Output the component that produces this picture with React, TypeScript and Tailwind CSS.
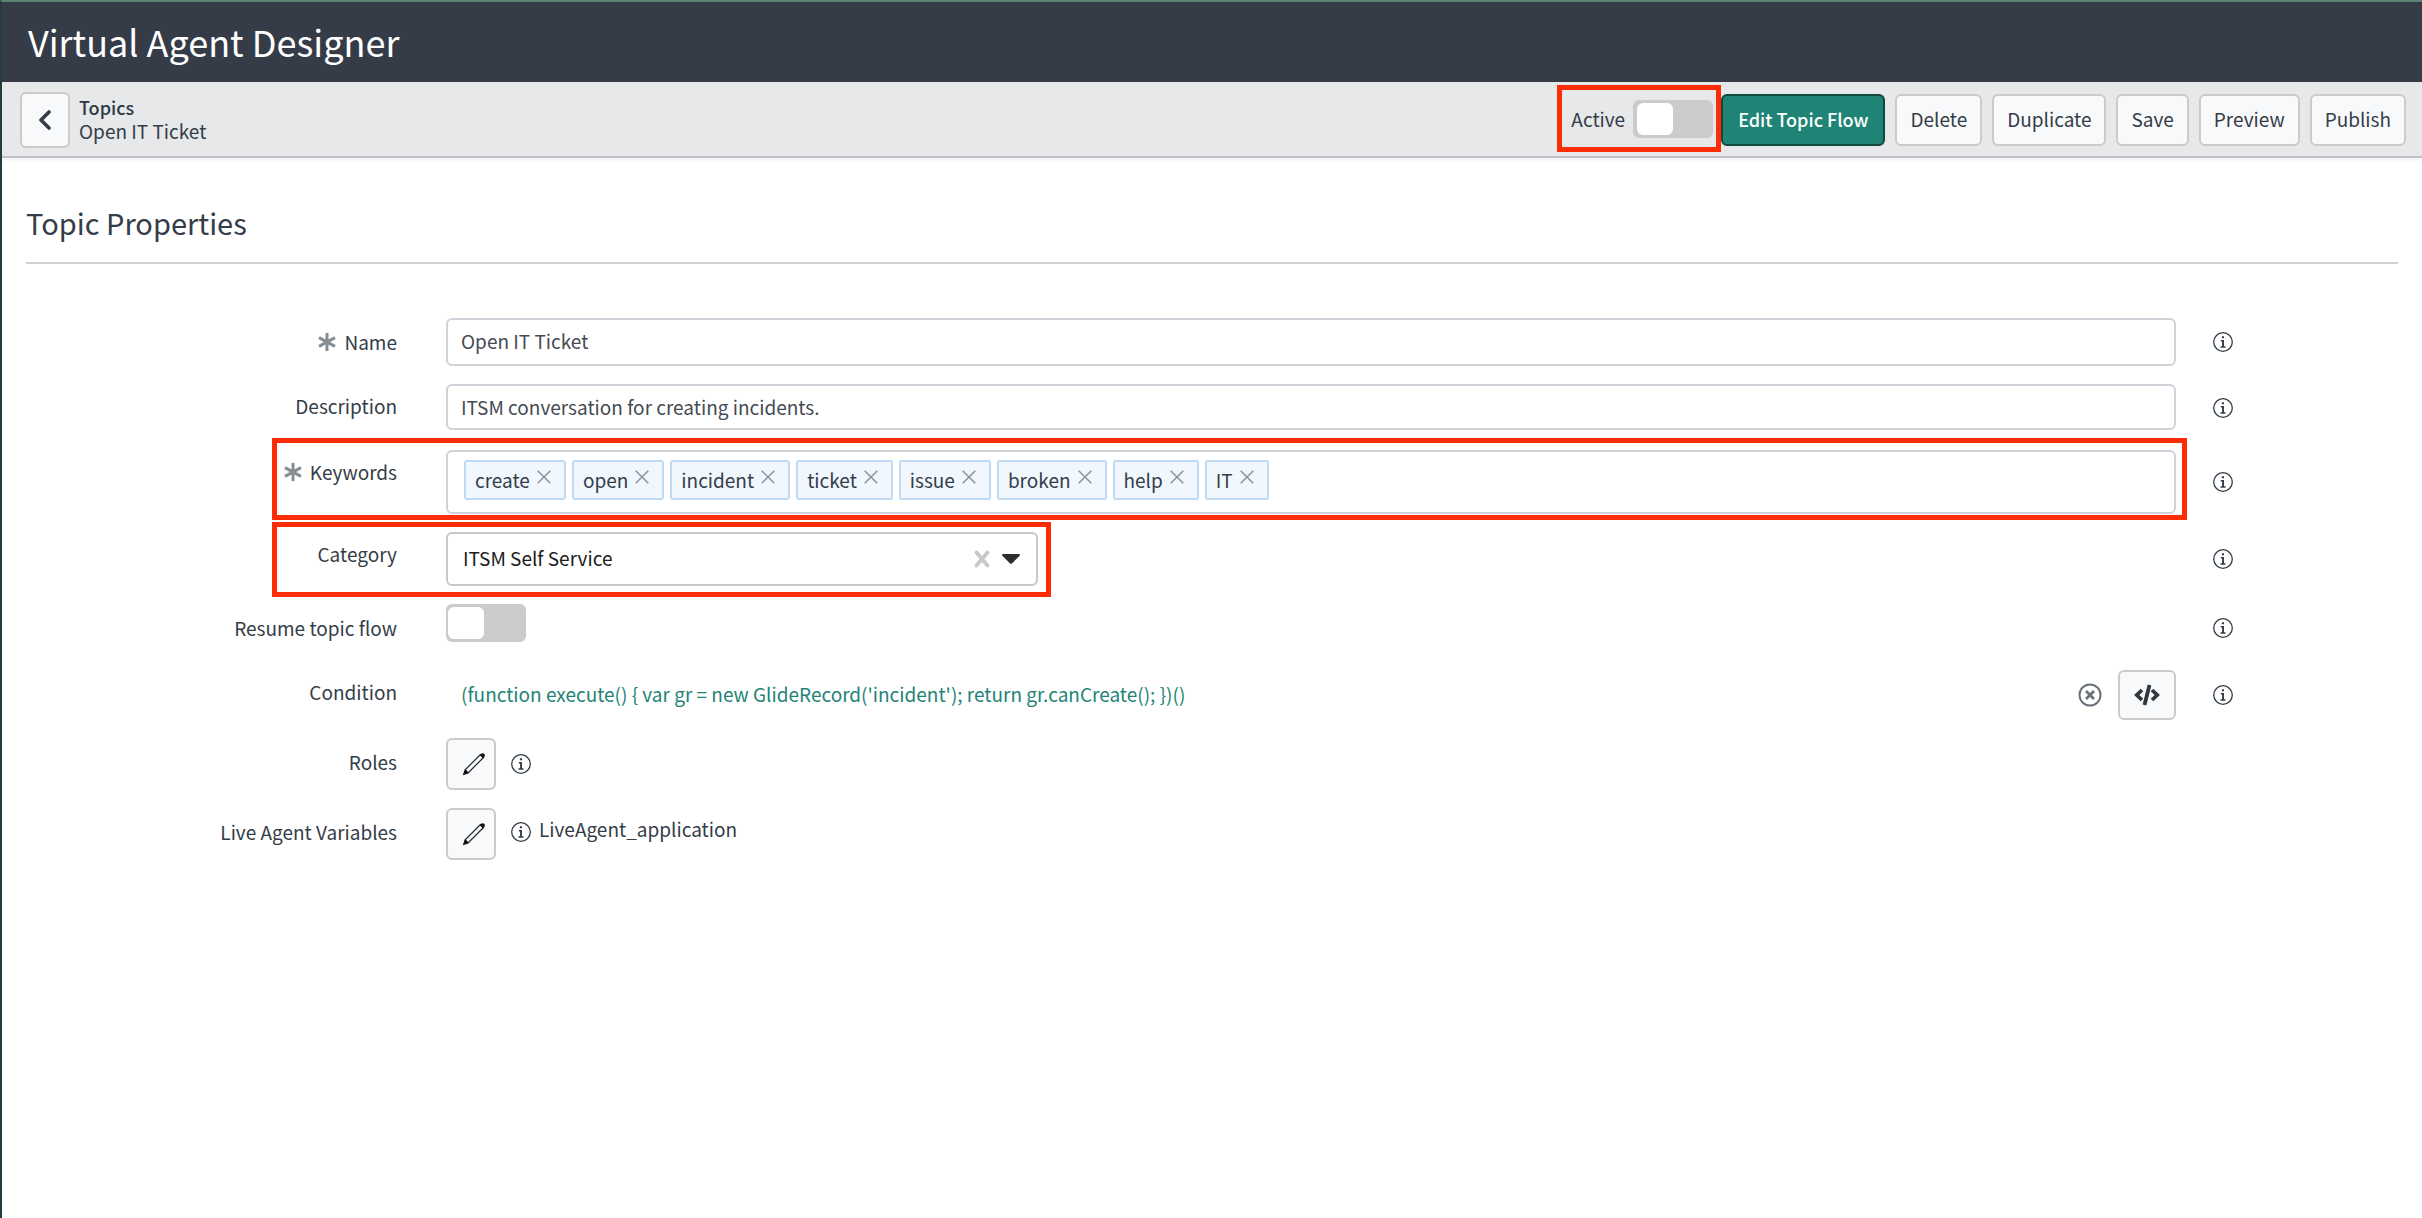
import React from "react";

const keywords = ["create", "open", "incident", "ticket", "issue", "broken", "help", "IT"];

const fieldClass =
  "w-full rounded-md border-2 border-[#cfd2d8] bg-white px-[13px] text-[19px] leading-6 text-[#444b53] outline-none";

function InfoIcon() {
  return (
    <svg className="h-5 w-5 shrink-0" viewBox="0 0 20 20" fill="none" aria-hidden="true">
      <circle cx="10" cy="10" r="9.3" stroke="#343d47" strokeWidth="1.3" />
      <path d="M8.9 4.2h2.1v2H8.900zM7.800 8h3.2v6.300h1.500v1.400H7.500v-1.400h1.600V9.400H7.800z" fill="#343d47" />
    </svg>
  );
}

function InfoButton({ label }: { label: string }) {
  return (
    <button type="button" aria-label={`About ${label}`} className="shrink-0 self-center">
      <InfoIcon />
    </button>
  );
}

function Asterisk() {
  return (
    <svg className="h-[18px] w-[18px] shrink-0" viewBox="0 0 18 18" fill="none" stroke="#868e95" strokeWidth="3" aria-hidden="true">
      <path d="M9 0v18M1 4.6l16 8.8M1 13.4l16-8.8" />
    </svg>
  );
}

function PencilIcon() {
  return (
    <svg className="h-6 w-6" viewBox="0 0 24 24" fill="none" aria-hidden="true">
      <path d="M3 18 18.500 2.500l3 3L6 21" stroke="#24292e" strokeWidth="1.200" strokeLinejoin="round" />
      <path d="M2.600 17.600.8 23.200l5.600-1.800c-.2-2-1.800-3.600-3.800-3.800z" fill="#111" />
      <path d="M17.800 3.200c1.200-2 3-2.600 4.400-1.400s.8 3.200-1.400 4.400z" fill="#111" />
    </svg>
  );
}

function ThinCross() {
  return (
    <svg className="h-[14px] w-[14px]" viewBox="0 0 14 14" fill="none" stroke="#8b9299" strokeWidth="1.5" aria-hidden="true">
      <path d="M.7.7l12.600 12.600M13.300.7.7 13.300" />
    </svg>
  );
}

function Toggle({ id, inset }: { id: string; inset?: boolean }) {
  return (
    <input
      id={id}
      type="checkbox"
      role="switch"
      className={`flex h-[38px] w-20 shrink-0 appearance-none items-center rounded-md bg-[#cbcbcb] before:h-8 before:w-9 before:rounded-md before:bg-white checked:justify-end checked:bg-[#1f8476] ${
        inset ? "px-1" : "px-[2px]"
      }`}
    />
  );
}

function Row({
  id,
  label,
  required,
  low,
  info = true,
  children,
  mark,
}: {
  id: string;
  label: string;
  required?: boolean;
  low?: boolean;
  info?: boolean;
  children: React.ReactNode;
  mark?: React.ReactNode;
}) {
  return (
    <div className="relative flex min-h-12 items-start">
      <div className={`flex w-[371px] shrink-0 items-center justify-end gap-2 ${low ? "pt-3" : "pt-[10px]"}`}>
        {required && <Asterisk />}
        <label htmlFor={id} className="leading-6 whitespace-nowrap">
          {label}
        </label>
      </div>
      <div className="ml-[49px] flex min-w-0 flex-1 items-center">{children}</div>
      <div className="flex w-[222px] shrink-0 self-stretch pl-[37px]">{info && <InfoButton label={label} />}</div>
      {mark}
    </div>
  );
}

function BarButton({ children, primary }: { children: string; primary?: boolean }) {
  return (
    <button
      type="button"
      className={`h-[52px] rounded-md border-2 pb-[2px] leading-6 whitespace-nowrap ${
        primary
          ? "border-[#11493f] bg-[#1f8476] px-[15px] text-[18px] font-medium text-white"
          : "border-[#cacbcd] bg-[#f8f9fb] px-[13px] text-[#343d47]"
      }`}
    >
      {children}
    </button>
  );
}

function EditButton({ id }: { id: string }) {
  return (
    <button
      id={id}
      type="button"
      className="flex h-[52px] w-[50px] shrink-0 items-center justify-center rounded-md border-2 border-[#cacbcd] bg-[#f8f9fb] pl-[6px]"
    >
      <PencilIcon />
    </button>
  );
}

export default function App() {
  return (
    <div className="min-h-screen border-t-2 border-l-2 border-t-[#5b8270] border-l-[#233c42] bg-white font-['Noto_Sans_CJK_SC','Source_Sans_Pro',sans-serif] text-[19px] text-[#343d47]">
      <header className="flex h-20 items-center bg-[#353c48] px-[26px] pb-[3px]">
        <h1 className="text-[36px] leading-[48px] font-normal text-white">Virtual Agent Designer</h1>
      </header>

      <div className="flex h-[76px] items-center justify-between border-b-2 border-[#bdc0c5] bg-[#e6e8ea] pt-[2px] pr-4 pl-[18px] shadow-[0_2px_4px_rgba(0,0,0,0.06)]">
        <div className="flex items-center gap-[9px]">
          <button
            type="button"
            aria-label="Back"
            className="flex h-14 w-[50px] items-center justify-center rounded-md border-2 border-[#cacbcd] bg-[#f8f9fb]"
          >
            <svg className="h-5 w-[14px]" viewBox="0 0 14 20" fill="none" stroke="#343d47" strokeWidth="3.600" strokeLinecap="round" strokeLinejoin="round" aria-hidden="true">
              <path d="M11 2 3 10l8 8" />
            </svg>
          </button>
          <nav aria-label="Breadcrumb" className="flex flex-col pb-[3px] leading-6">
            <a href="#topics" className="text-[18px] font-medium text-[#2e3743]">
              Topics
            </a>
            <span>Open IT Ticket</span>
          </nav>
        </div>

        <div className="flex items-center gap-[10px]">
          <div className="flex items-center">
            <div className="relative flex h-[52px] items-center gap-2 pr-2">
              <label htmlFor="active" className="pb-[3px] leading-6">
                Active
              </label>
              <span className="flex pb-[2px]">
                <Toggle id="active" inset />
              </span>
              <div className="pointer-events-none absolute -top-[9px] right-0 -bottom-[6px] -left-[14px] border-[5px] border-[#fb2c06]" />
            </div>
            <BarButton primary>Edit Topic Flow</BarButton>
          </div>
          <BarButton>Delete</BarButton>
          <BarButton>Duplicate</BarButton>
          <BarButton>Save</BarButton>
          <BarButton>Preview</BarButton>
          <BarButton>Publish</BarButton>
        </div>
      </div>

      <main className="px-6 pt-11">
        <h2 className="border-b-2 border-[#cfd1d5] pb-5 text-[29px] leading-10 font-normal">Topic Properties</h2>

        <form className="flex flex-col gap-[18px] pt-[54px]">
          <Row id="name" label="Name" required low>
            <input id="name" type="text" defaultValue="Open IT Ticket" className={`${fieldClass} h-12 pb-1`} />
          </Row>

          <Row id="description" label="Description">
            <input
              id="description"
              type="text"
              defaultValue="ITSM conversation for creating incidents."
              className={`${fieldClass} h-[46px] pb-[2px]`}
            />
          </Row>

          <Row
            id="keywords"
            label="Keywords"
            required
            mark={
              <div className="pointer-events-none absolute -top-3 right-[211px] -bottom-[6px] left-[246px] border-[5px] border-[#fb2c06]" />
            }
          >
            <div className="flex h-16 w-full items-start gap-[6px] rounded-md border-2 border-[#cfd2d8] px-4 pt-2">
              {keywords.map((word) => (
                <span
                  key={word}
                  className="flex h-10 items-center gap-[7px] rounded-[3px] border-2 border-[#c0daf3] bg-[#f0f7ff] pr-[13px] pl-[9px]"
                >
                  <span className="leading-6">{word}</span>
                  <button type="button" aria-label={`Remove ${word}`} className="pb-[6px]">
                    <ThinCross />
                  </button>
                </span>
              ))}
              <input id="keywords" type="text" className="h-10 min-w-0 flex-1 outline-none" />
            </div>
          </Row>

          <Row
            id="category"
            label="Category"
            mark={
              <div className="pointer-events-none absolute -top-[10px] -bottom-[11px] left-[246px] w-[779px] border-[5px] border-[#fb2c06]" />
            }
          >
            <div className="relative flex w-[592px] items-center">
              <select
                id="category"
                className="h-[54px] w-full appearance-none rounded-md border-2 border-[#c6c7c8] bg-white px-[15px] pb-[2px] leading-6 text-[#1c1c1c] outline-none"
              >
                <option>ITSM Self Service</option>
              </select>
              <div className="pointer-events-none absolute right-[18px] flex items-center gap-3">
                <button type="button" aria-label="Clear category" className="pointer-events-auto">
                  <svg className="h-5 w-4" viewBox="0 0 16 20" fill="none" stroke="#c8c8c8" strokeWidth="3.800" strokeLinecap="round" aria-hidden="true">
                    <path d="M2.500 3.500l11 13M13.500 3.500l-11 13" />
                  </svg>
                </button>
                <svg className="h-[10px] w-[18px]" viewBox="0 0 18 10" fill="#2b2d30" aria-hidden="true">
                  <path d="M1.200 0h15.600c1.200 0 1.600 1 .8 1.700L10.200 9.300c-.7.700-1.700.7-2.400 0L.400 1.700C-.4 1 0 0 1.200 0z" />
                </svg>
              </div>
            </div>
          </Row>

          <Row id="resume" label="Resume topic flow" low>
            <Toggle id="resume" />
          </Row>

          <Row id="condition" label="Condition">
            <output id="condition" className="min-w-0 flex-1 pb-[2px] pl-[15px] leading-7 text-[#1f8476]">
              {"(function execute() { var gr = new GlideRecord('incident'); return gr.canCreate(); })()"}
            </output>
            <button type="button" aria-label="Clear condition" className="mr-4">
              <svg className="h-6 w-6" viewBox="0 0 24 24" fill="none" stroke="#6a7279" aria-hidden="true">
                <circle cx="12" cy="12" r="10.500" strokeWidth="2" />
                <path d="M8 8l8 8M16 8l-8 8" strokeWidth="2.800" />
              </svg>
            </button>
            <button
              type="button"
              aria-label="Edit script"
              className="flex h-[50px] w-[58px] items-center justify-center rounded-md border-2 border-[#cacbcd] bg-[#f8f9fb]"
            >
              <svg className="h-[22px] w-[26px]" viewBox="0 0 26 22" fill="none" stroke="#2f3741" strokeWidth="3.800" aria-hidden="true">
                <path d="M8 6 2.800 11 8 16M18 6l5.200 5L18 16M15.500 1l-5 20" />
              </svg>
            </button>
          </Row>

          <Row id="roles" label="Roles" low info={false}>
            <EditButton id="roles" />
            <span className="ml-[15px] flex">
              <InfoButton label="Roles" />
            </span>
          </Row>

          <Row id="variables" label="Live Agent Variables" low info={false}>
            <EditButton id="variables" />
            <span className="ml-[15px] flex items-center gap-2 pb-1">
              <InfoButton label="Live Agent Variables" />
              <span className="pb-[6px] leading-6">LiveAgent_application</span>
            </span>
          </Row>
        </form>
      </main>
    </div>
  );
}
